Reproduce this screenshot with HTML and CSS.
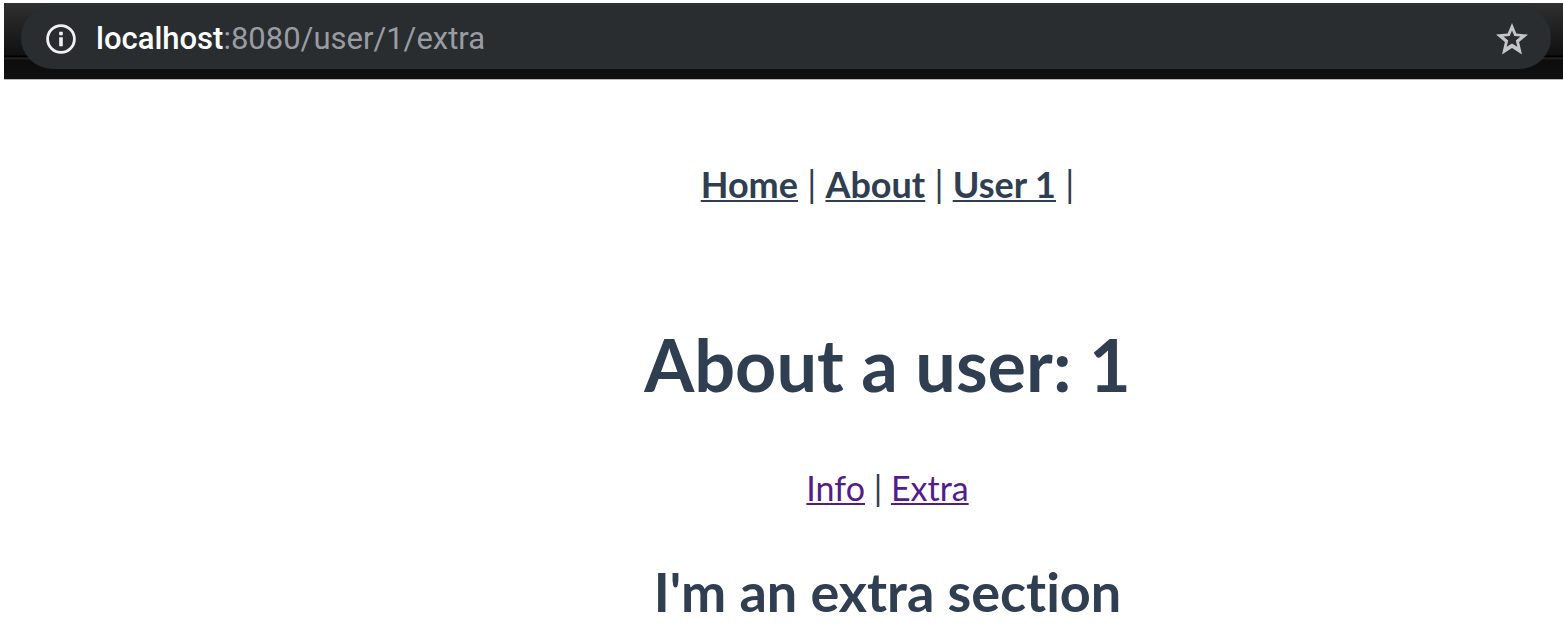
FILE: index.html
```html
<!DOCTYPE html>
<html lang="en">
<head>
  <meta charset="utf-8">
  <title>User 1</title>
  <link rel="stylesheet" href="styles.css">
</head>
<body>
  <header class="toolbar">
    <div class="address">
      <svg class="info-icon" viewBox="0 0 30 30" aria-hidden="true">
        <circle cx="15" cy="15" r="13.4" fill="none" stroke="currentColor" stroke-width="2.8"/>
        <path d="M13.2 7.8h3.6v3.4h-3.6zM13.2 13.2h3.6v9h-3.6z" fill="currentColor"/>
      </svg>
      <p class="url"><span class="host">localhost</span>:8080/user/1/extra</p>
      <button class="bookmark" type="button" aria-label="Bookmark this page">
        <svg class="star-icon" viewBox="0 0 32 32" aria-hidden="true">
          <path fill="currentColor" fill-rule="evenodd" d="M16 0l4.3 10.6L32 11.6l-8.900 7.500L26 31.400l-10-6.400-10 6.400 2.900-12.300L0 11.600l11.700-1zM16 7.400l-2.300 5.700-6.200.5 4.700 4-1.500 6.200L16 20.600l5.300 3.200-1.500-6.200 4.700-4-6.200-.5z"/>
        </svg>
      </button>
    </div>
  </header>
  <main class="page">
    <nav class="main-nav">
      <a href="#home">Home</a> | <a href="#about">About</a> | <a href="#user">User 1</a> |
    </nav>
    <h1 class="title">About a user: 1</h1>
    <nav class="sub-nav">
      <a href="#info">Info</a> | <a href="#extra">Extra</a>
    </nav>
    <h2 class="section-title">I'm an extra section</h2>
  </main>
</body>
</html>
```
FILE: styles.css
```css
* {
  box-sizing: border-box;
}

body {
  margin: 0;
  padding: 3px 0 0 4px;
  background: #fff;
  color: #2f3e50;
  font: 36px/48px Lato, sans-serif;
  font-variant-ligatures: none;
}

.toolbar {
  padding: 3px 12px 10px 17px;
  border-bottom: 1px solid #b8b8b8;
  background: linear-gradient(#303030, #101010 52px, #000 53px, #000 54px, #2a2a2a 55px, #0d0d0d 57px, #101010);
}

.address {
  display: flex;
  align-items: center;
  gap: 20px;
  height: 63px;
  padding: 2px 23px 0 25px;
  border-radius: 32px;
  background: #292d30;
  color: #999ca2;
}

.info-icon {
  width: 30px;
  height: 30px;
  color: #f1f1f3;
}

.url {
  flex: 1;
  margin: 0;
  font: 31px/40px Roboto, sans-serif;
}

.host {
  color: #fff;
  font-weight: 500;
}

.bookmark {
  display: flex;
  padding: 0;
  border: 0;
  background: none;
  color: #c3c5c8;
}

.star-icon {
  width: 32px;
  height: 32px;
}

.page {
  padding: 80px 0 0 208px;
  text-align: center;
}

.main-nav a {
  color: #2f3e50;
  font-weight: 700;
}

.sub-nav {
  font-size: 34px;
}

.sub-nav a {
  color: #551a8b;
}

.main-nav a,
.sub-nav a {
  text-decoration-thickness: 2px;
  text-underline-offset: 2px;
  text-decoration-skip-ink: none;
}

.title {
  margin: 108px 0 52px;
  font-size: 72px;
  line-height: 96px;
}

.section-title {
  margin: 48px 0 0;
  font-size: 54px;
  line-height: 64px;
}
```
